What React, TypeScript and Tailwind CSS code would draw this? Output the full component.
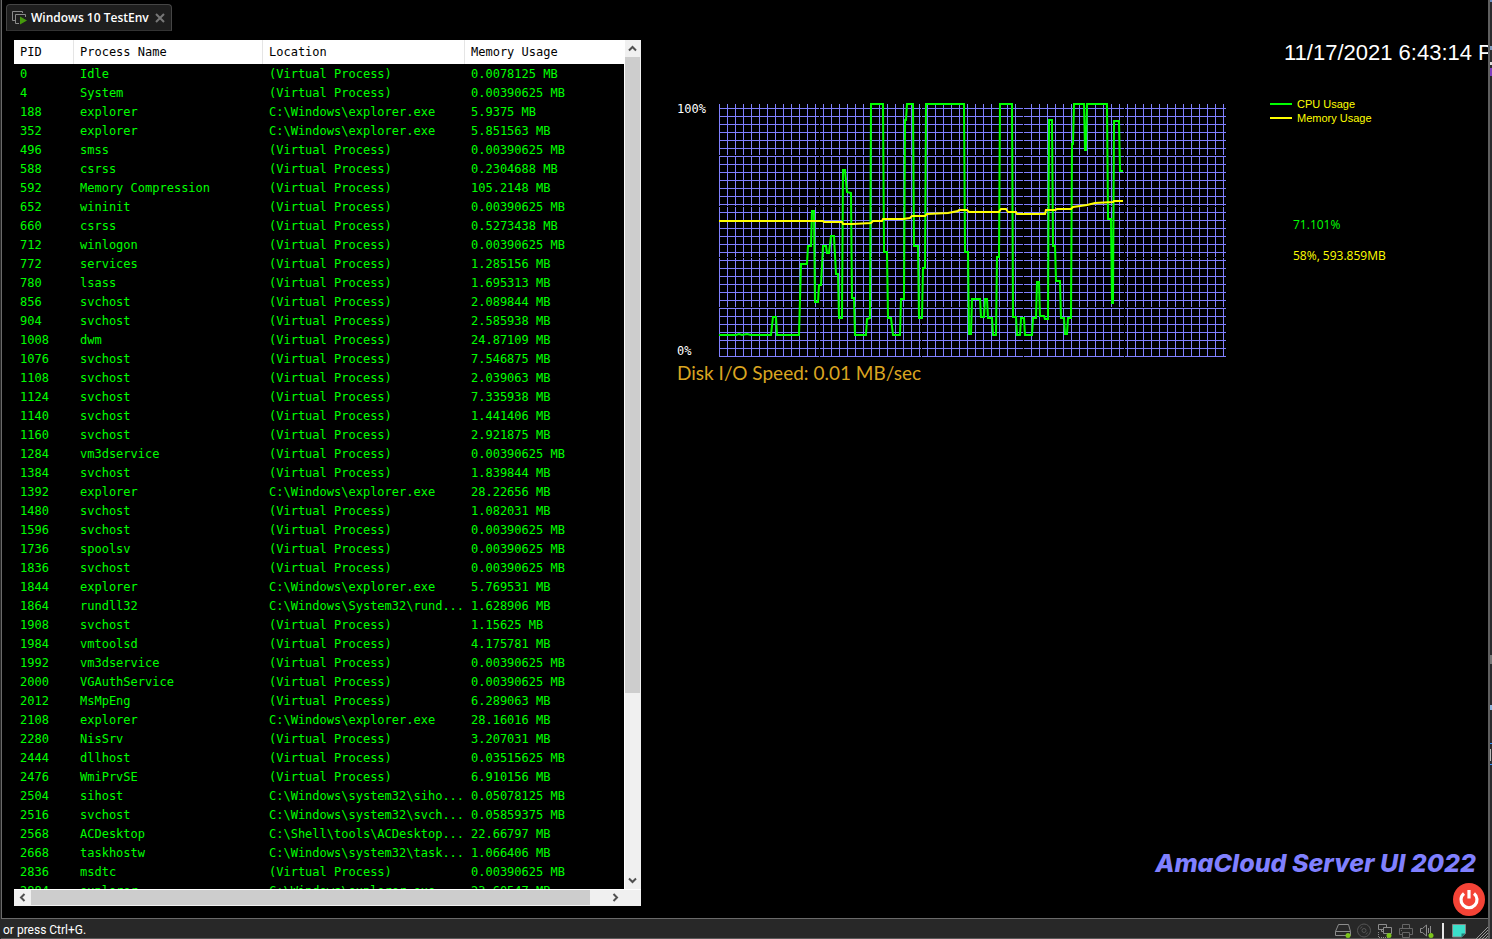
const V = "(Virtual Process)";
const EXPLORER = "C:\\Windows\\explorer.exe";

type Process = [pid: string, name: string, location: string, memory: string];

const processes: Process[] = [
  ["0", "Idle", V, "0.0078125 MB"],
  ["4", "System", V, "0.00390625 MB"],
  ["188", "explorer", EXPLORER, "5.9375 MB"],
  ["352", "explorer", EXPLORER, "5.851563 MB"],
  ["496", "smss", V, "0.00390625 MB"],
  ["588", "csrss", V, "0.2304688 MB"],
  ["592", "Memory Compression", V, "105.2148 MB"],
  ["652", "wininit", V, "0.00390625 MB"],
  ["660", "csrss", V, "0.5273438 MB"],
  ["712", "winlogon", V, "0.00390625 MB"],
  ["772", "services", V, "1.285156 MB"],
  ["780", "lsass", V, "1.695313 MB"],
  ["856", "svchost", V, "2.089844 MB"],
  ["904", "svchost", V, "2.585938 MB"],
  ["1008", "dwm", V, "24.87109 MB"],
  ["1076", "svchost", V, "7.546875 MB"],
  ["1108", "svchost", V, "2.039063 MB"],
  ["1124", "svchost", V, "7.335938 MB"],
  ["1140", "svchost", V, "1.441406 MB"],
  ["1160", "svchost", V, "2.921875 MB"],
  ["1284", "vm3dservice", V, "0.00390625 MB"],
  ["1384", "svchost", V, "1.839844 MB"],
  ["1392", "explorer", EXPLORER, "28.22656 MB"],
  ["1480", "svchost", V, "1.082031 MB"],
  ["1596", "svchost", V, "0.00390625 MB"],
  ["1736", "spoolsv", V, "0.00390625 MB"],
  ["1836", "svchost", V, "0.00390625 MB"],
  ["1844", "explorer", EXPLORER, "5.769531 MB"],
  ["1864", "rundll32", "C:\\Windows\\System32\\rund...", "1.628906 MB"],
  ["1908", "svchost", V, "1.15625 MB"],
  ["1984", "vmtoolsd", V, "4.175781 MB"],
  ["1992", "vm3dservice", V, "0.00390625 MB"],
  ["2000", "VGAuthService", V, "0.00390625 MB"],
  ["2012", "MsMpEng", V, "6.289063 MB"],
  ["2108", "explorer", EXPLORER, "28.16016 MB"],
  ["2280", "NisSrv", V, "3.207031 MB"],
  ["2444", "dllhost", V, "0.03515625 MB"],
  ["2476", "WmiPrvSE", V, "6.910156 MB"],
  ["2504", "sihost", "C:\\Windows\\system32\\siho...", "0.05078125 MB"],
  ["2516", "svchost", "C:\\Windows\\system32\\svch...", "0.05859375 MB"],
  ["2568", "ACDesktop", "C:\\Shell\\tools\\ACDesktop...", "22.66797 MB"],
  ["2668", "taskhostw", "C:\\Windows\\system32\\task...", "1.066406 MB"],
  ["2836", "msdtc", V, "0.00390625 MB"],
  ["2884", "explorer", EXPLORER, "23.60547 MB"],
];

const columns = ["PID", "Process Name", "Location", "Memory Usage"];

const cpuPoints =
  "0,233 17,233 20,232 23,233 28,232 32,233 52,233 54,215 57,215 58,233 80,233 82,162 88,162 89,144 92,144 93,109 95,109 96,200 99,200 100,183 102,183 104,144 107,144 108,151 110,151 112,134 115,134 117,172 119,172 120,216 123,216 124,68 126,68 128,90 132,91 133,196 135,196 136,233 147,233 148,217 151,216 152,2 164,2 165,150 168,150 169,216 172,216 174,233 181,233 182,197 185,197 186,18 187,18 188,2 194,2 195,144 199,144 200,216 203,216 204,166 206,166 207,2 245,2 246,150 249,150 250,232 252,232 253,197 261,197 262,215 265,215 266,197 268,197 269,216 273,216 274,233 277,233 278,155 280,155 281,2 293,2 294,215 297,215 298,233 301,233 302,216 305,216 306,233 313,233 314,216 317,216 318,180 320,180 321,214 325,214 326,217 329,217 330,18 333,18 334,144 336,144 337,179 341,179 342,216 345,216 346,232 348,232 349,216 352,216 353,42 354,42 355,2 365,2 366,48 367,48 368,2 388,2 389,117 392,117 393,201 394,201 395,19 400,19 401,69 404,69";

const memoryPoints =
  "0,119 104,119 105,120 123,120 124,122 134,122 152,121 154,119 163,119 164,117 184,117 191,116 193,114 206,114 208,112 229,111 239,109 240,108 248,108 250,110 280,110 282,107 287,107 289,110 297,110 298,112 326,112 327,108 336,108 338,107 352,107 354,105 368,103 376,101 394,100 395,99 404,99";

const verticals = Array.from({ length: 64 }, (_, i) => i * 8);
const horizontals = Array.from({ length: 32 }, (_, i) => 6 + i * 8);

function UsageChart() {
  return (
    <svg width="508" height="256" viewBox="0 0 508 256" role="img" aria-label="Usage chart" className="block shrink-0">
      <g fill="#8080ff" shapeRendering="crispEdges">
        {verticals.map((x) => (
          <rect key={x} x={x} y="2" width="1" height="253" />
        ))}
        {horizontals.map((y) => (
          <rect key={y} x="0" y={y} width="507" height="1" />
        ))}
      </g>
      <g fill="#000" shapeRendering="crispEdges">
        {[100, 202, 304, 405].map((x) => (
          <rect key={x} x={x} y="0" width="1" height="256" />
        ))}
        {[53, 104, 155, 205].map((y) => (
          <rect key={y} x="0" y={y} width="508" height="1" />
        ))}
      </g>
      <polyline points={cpuPoints} fill="none" stroke="#00ff00" strokeWidth="2" />
      <polyline points={memoryPoints} fill="none" stroke="#ffff00" strokeWidth="2" />
    </svg>
  );
}

function Chevron({ d }: { d: string }) {
  return (
    <svg width="9" height="9" viewBox="0 0 9 9" fill="none" stroke="#505050" strokeWidth="2" aria-hidden="true">
      <path d={d} />
    </svg>
  );
}

function ProcessList() {
  return (
    <section className="flex w-[627px] shrink-0 flex-col bg-[#f0f0f0]">
      <div className="flex min-h-0 flex-1">
        <div className="min-w-0 flex-1 overflow-hidden bg-black">
          <table className="w-full table-fixed border-collapse text-left font-['DejaVu_Sans_Mono','Liberation_Mono',monospace] text-[12px] leading-[18px]">
            <colgroup>
              <col className="w-[60px]" />
              <col className="w-[189px]" />
              <col className="w-[202px]" />
              <col />
            </colgroup>
            <thead>
              <tr className="h-6 bg-white text-black">
                {columns.map((c) => (
                  <th key={c} className="p-0 font-normal">
                    <div className={c === "Memory Usage" ? "h-6 pl-1.5 leading-6" : "h-6 border-r border-[#e5e5e5] pl-1.5 leading-6"}>{c}</div>
                  </th>
                ))}
              </tr>
            </thead>
            <tbody className="text-[#00ff00]">
              {processes.map(([pid, name, location, memory]) => (
                <tr key={pid} className="h-[19px]">
                  <td className="p-0 pl-1.5">{pid}</td>
                  <td className="p-0 pl-1.5">{name}</td>
                  <td className="whitespace-nowrap p-0 pl-1.5">{location}</td>
                  <td className="whitespace-nowrap p-0 pl-1.5">{memory}</td>
                </tr>
              ))}
            </tbody>
          </table>
        </div>
        <div className="flex w-[17px] flex-col border-l border-white pr-px">
          <button aria-label="Scroll up" className="flex h-[17px] items-center justify-center">
            <Chevron d="M1 6.500 4.500 3 8 6.500" />
          </button>
          <div className="flex-1">
            <div className="h-[78%] bg-[#cdcdcd]" />
          </div>
          <button aria-label="Scroll down" className="flex h-[17px] items-center justify-center">
            <Chevron d="M1 2.500 4.500 6 8 2.500" />
          </button>
        </div>
      </div>
      <div className="flex h-[17px] border-t border-white pb-px pr-[17px]">
        <button aria-label="Scroll left" className="flex w-[17px] items-center justify-center">
          <Chevron d="M6.500 1 3 4.500 6.500 8" />
        </button>
        <div className="flex-1">
          <div className="h-full w-[97%] bg-[#cdcdcd]" />
        </div>
        <button aria-label="Scroll right" className="flex w-[17px] items-center justify-center">
          <Chevron d="M2.500 1 6 4.500 2.500 8" />
        </button>
      </div>
    </section>
  );
}

function StatusIcons() {
  return (
    <div className="flex items-center gap-1 pt-1">
      <svg width="17" height="16" viewBox="0 0 17 16" fill="none" stroke="#8c8c8c" aria-hidden="true">
        <path d="M3.500 1.500h10l2 7v4h-15v-4zM.5 8.500h15" />
        <circle cx="13" cy="12.500" r="2.500" fill="#7cc51c" stroke="none" />
      </svg>
      <svg width="17" height="16" viewBox="0 0 17 16" fill="none" stroke="#555" aria-hidden="true">
        <circle cx="8" cy="7.500" r="6.500" />
        <circle cx="8" cy="7.500" r="2" />
        <path d="M4.500 5.500 6 3.500M10 11.500l1.500-2" />
      </svg>
      <svg width="17" height="16" viewBox="0 0 17 16" fill="none" stroke="#8c8c8c" aria-hidden="true">
        <path d="M6 6.500H1.500v-5h8V4M6.500 4.500h8v6h-8zM4.500 6.500v2h2M10.500 10.500v2" />
        <path d="M1.500 9v5.500H11" strokeDasharray="1 1" />
        <circle cx="12" cy="12.500" r="2.500" fill="#7cc51c" stroke="none" />
      </svg>
      <svg width="17" height="16" viewBox="0 0 17 16" fill="none" stroke="#666" aria-hidden="true">
        <path d="M4.500 5.500v-4h7v4M4 11.500H1.500v-6h13v6H12M4.500 9.500h7v5h-7zM3 7.500h1" />
      </svg>
      <svg width="17" height="16" viewBox="0 0 17 16" fill="none" stroke="#8c8c8c" aria-hidden="true">
        <path d="M1.500 5.500h2l4-3.500v11l-4-3.500h-2zM9.500 5v5M11.500 3v7" />
        <circle cx="12" cy="12.500" r="2.500" fill="#7cc51c" stroke="none" />
      </svg>
      <span className="ml-0.5 h-4 w-0.5 bg-[#e8e8e8]" />
      <svg width="22" height="16" viewBox="0 0 22 16" aria-hidden="true">
        <path d="M4.500 1.500h13v9l-4 3.500h-9z" fill="#3be0ca" stroke="#858585" />
        <path d="M17.500 10.500h-4v4z" fill="#207e76" />
      </svg>
      <svg width="12" height="12" viewBox="0 0 12 12" stroke="#9a9a9a" aria-hidden="true" className="ml-0.5 self-end">
        <path d="M0 12 12 0M3 12l9-9M6 12l6-6M9 12l3-3" />
      </svg>
    </div>
  );
}

export default function App() {
  return (
    <div className="flex h-screen overflow-hidden bg-[#282828] font-['Open_Sans',sans-serif] text-white">
      <div className="ml-px flex min-w-0 flex-1 flex-col border-r-2 border-[#5f5f5f]">
        <main className="flex min-h-0 flex-1 border-b border-l border-[#6a6a6a] bg-black">
          <div className="flex shrink-0 flex-col pb-3 pl-3">
            <div className="-ml-2 mb-[9px] flex h-[31px] pt-1">
              <div className="flex w-[166px] items-center rounded-t-sm border border-[#454545] border-b-[#333] bg-[#1e1e1e] pl-[5px] pr-1.5">
                <svg width="16" height="16" viewBox="0 0 16 16" fill="none" stroke="#8a8a8a" aria-hidden="true">
                  <path d="M3 10.500H.5v-9h10V3M7 13.500H3.500v-9h10V7" />
                  <path d="M8 6.500v8l7-4z" fill="#459a0c" stroke="none" />
                </svg>
                <span className="ml-[3px] whitespace-nowrap text-[12px] font-semibold">Windows 10 TestEnv</span>
                <button aria-label="Close tab" className="ml-auto">
                  <svg width="10" height="10" viewBox="0 0 10 10" stroke="#777" strokeWidth="2">
                    <path d="m1 1 8 8M9 1 1 9" />
                  </svg>
                </button>
              </div>
            </div>
            <div className="flex min-h-0 flex-1">
              <ProcessList />
            </div>
          </div>

          <div className="flex min-w-0 flex-1 flex-col overflow-hidden pl-9 pt-10">
            <header className="h-[62px] w-[204px] self-end whitespace-nowrap font-['Liberation_Sans',sans-serif] text-[22px] leading-[26px]">
              11/17/2021 6:43:14 PM
            </header>
            <div className="flex">
              <div className="flex w-[42px] shrink-0 flex-col justify-between font-['DejaVu_Sans_Mono','Liberation_Mono',monospace] text-[12px] leading-[14px]">
                <span>100%</span>
                <span>0%</span>
              </div>
              <UsageChart />
              <div className="-mt-1.5 ml-auto flex w-[218px] shrink-0 flex-col whitespace-nowrap">
                <ul className="pt-px font-['Liberation_Sans',sans-serif] text-[11px] leading-[14px] text-[#ffff00]">
                  <li className="flex items-center gap-[5px]">
                    <span className="h-0.5 w-[22px] bg-[#00ff00]" />
                    CPU Usage
                  </li>
                  <li className="flex items-center gap-[5px]">
                    <span className="h-0.5 w-[22px] bg-[#ffff00]" />
                    Memory Usage
                  </li>
                </ul>
                <p className="mt-[92px] pl-[23px] text-[12px] leading-4 text-[#00ff00]">71.101%</p>
                <p className="mt-[15px] pl-[23px] text-[12px] leading-4 text-[#ffff00]">58%, 593.859MB</p>
              </div>
            </div>
            <p className="font-[Lato,sans-serif] text-[19px] leading-[30px] text-[#daa520]">Disk I/O Speed: 0.01 MB/sec</p>
            <footer className="mt-auto flex flex-col items-end">
              <h1 className="whitespace-nowrap pr-3 font-[Inter,sans-serif] text-[25px] font-extrabold italic leading-8 text-[#8080ff]">
                AmaCloud Server UI 2022
              </h1>
              <button aria-label="Power" className="mb-0.5 mr-[3px] mt-1 block">
                <svg width="32" height="33" viewBox="0 0 32 33">
                  <ellipse cx="16" cy="16.500" rx="16" ry="16.500" fill="#f44336" />
                  <path d="M11 10.500a8 8 0 1 0 10 0M16 7v8.500" fill="none" stroke="#fff" strokeWidth="3.200" />
                </svg>
              </button>
            </footer>
          </div>
        </main>
        <footer className="flex h-5 shrink-0 items-center justify-between border-b border-[#5a5a5a] pl-0.5">
          <span className="pt-0.5 font-[Roboto,sans-serif] text-[12px] leading-5">or press Ctrl+G.</span>
          <StatusIcons />
        </footer>
      </div>
      <svg width="2" height="939" className="shrink-0" aria-hidden="true">
        <rect width="2" height="939" fill="#2b2b2e" />
        <rect y="0" width="2" height="2" fill="#6f8fc0" />
        <rect y="46" width="2" height="4" fill="#7f9cc0" />
        <rect y="62" width="2" height="3" fill="#ddd" />
        <rect y="68" width="2" height="8" fill="#7f3fbf" />
        <rect y="655" width="2" height="9" fill="#777" />
        <rect y="705" width="2" height="5" fill="#8fb4dc" />
        <rect y="743" width="2" height="1" fill="#3794ff" />
        <rect y="749" width="1" height="12" fill="#bbb" />
        <rect y="764" width="2" height="1" fill="#3794ff" />
      </svg>
    </div>
  );
}
